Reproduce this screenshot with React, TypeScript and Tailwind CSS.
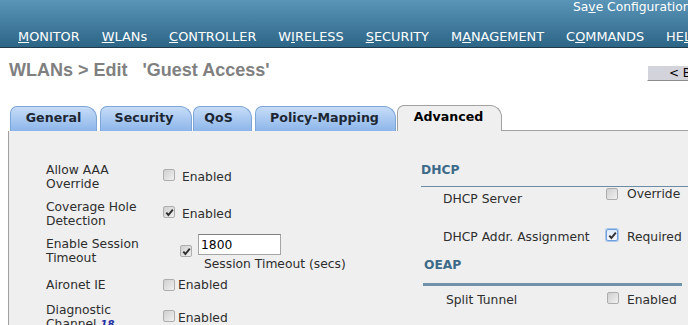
import React from 'react';

interface BoxProps {
  checked?: boolean;
  focus?: boolean;
  className?: string;
}

// small grey xp-style checkbox
function Box({ checked = false, focus = false, className = '' }: BoxProps) {
  return (
    <span
      className={`inline-flex h-[12px] w-[12px] shrink-0 items-center justify-center rounded-[2px] border ${
        focus
          ? 'border-[#6f9fdc] bg-gradient-to-b from-[#dfe9f7] to-[#f7f9fc] ring-1 ring-[#a9c6ee]'
          : 'border-[#adadad] bg-gradient-to-br from-[#cfcfcf] to-[#f1f1f1]'
      } ${className}`}
    >
      {checked && (
        <svg width="9" height="9" viewBox="0 0 9 9">
          <path d="M1.3 4.6 L3.4 7 L7.8 1.6" fill="none" stroke="#2f2f2f" strokeWidth="1.9" />
        </svg>
      )}
    </span>
  );
}

const nav = [
  ['', 'M', 'ONITOR'],
  ['', 'W', 'LANs'],
  ['', 'C', 'ONTROLLER'],
  ['W', 'I', 'RELESS'],
  ['', 'S', 'ECURITY'],
  ['M', 'A', 'NAGEMENT'],
  ['C', 'O', 'MMANDS'],
  ['HE', 'L', 'P'],
];

export default function App() {
  return (
    <div className="h-[325px] w-[688px] overflow-hidden bg-white font-['DejaVu_Sans',Verdana,sans-serif] text-[12.3px] text-[#2d2d2d]">
      {/* top bar */}
      <div className="h-[48px] border-b border-[#1e3a4b] bg-gradient-to-b from-[#5a95b8] to-[#2c6586] text-white">
        <div className="whitespace-nowrap pl-[573px] leading-[14px]">
          Sa<span className="underline">v</span>e Configuration
        </div>
        <div className="mt-[16px] flex gap-[22px] whitespace-nowrap pl-[18px] text-[12.9px] leading-[14px]">
          {nav.map(([a, u, b]) => (
            <span key={a + u + b}>
              {a}
              <span className="underline">{u}</span>
              {b}
            </span>
          ))}
        </div>
      </div>

      {/* title */}
      <div className="mt-[12px] flex">
        <div className="w-[647px] shrink-0 whitespace-pre pl-[9px] font-['Liberation_Sans',Arial,sans-serif] text-[18px] font-bold leading-[20px] text-[#808080]">
          {"WLANs > Edit   'Guest Access'"}
        </div>
        <div className="mt-[5px] h-[16px] w-[80px] shrink-0 border-t border-l border-b border-t-white border-l-white border-b-[#8c8c8c] bg-[#d3d3dc] pl-[21px] text-[12px] leading-[14px] text-black">
          &lt; Back
        </div>
      </div>

      {/* tabs */}
      <div className="mt-[24px] flex h-[26px] items-end pl-[10px] text-[12.6px] font-bold leading-[14px] text-[#1d2733]">
        <div className="flex h-[25px] w-[87px] justify-center rounded-tl-[7px] rounded-tr-[12px] border border-b-0 border-[#7da5d6] bg-gradient-to-b from-[#c6dcf7] to-[#8db6ea] pt-[4px]">
          General
        </div>
        <div className="ml-[3px] flex h-[25px] w-[92px] justify-center rounded-tl-[7px] rounded-tr-[12px] border border-b-0 border-[#7da5d6] bg-gradient-to-b from-[#c6dcf7] to-[#8db6ea] pr-[4px] pt-[4px]">
          Security
        </div>
        <div className="ml-[1px] flex h-[25px] w-[59px] justify-center rounded-tl-[7px] rounded-tr-[12px] border border-b-0 border-[#7da5d6] bg-gradient-to-b from-[#c6dcf7] to-[#8db6ea] pr-[8px] pt-[4px]">
          QoS
        </div>
        <div className="ml-[3px] flex h-[25px] w-[141px] justify-center rounded-tl-[7px] rounded-tr-[12px] border border-b-0 border-[#7da5d6] bg-gradient-to-b from-[#c6dcf7] to-[#8db6ea] pr-[2px] pt-[4px]">
          Policy-Mapping
        </div>
        <div className="ml-[1px] flex h-[26px] w-[105px] justify-center rounded-tl-[7px] rounded-tr-[12px] border border-b-0 border-[#a2a2a2] bg-[#efefef] pr-[2px] pt-[4px] text-black">
          Advanced
        </div>
        <div className="h-full flex-1 border-b border-[#a2a2a2]" />
      </div>

      {/* panel */}
      <div className="ml-[8px] flex h-[200px] border-l border-[#a0a0a0] bg-[#efefef] leading-[14px]">
        {/* left column */}
        <div className="flex w-[412px] shrink-0 flex-col pl-[37px] pt-[32px]">
          <div className="flex">
            <div className="w-[117px] shrink-0">
              Allow AAA
              <br />
              Override
            </div>
            <div className="flex items-center">
              <Box className="mb-[4px]" />
              <span className="ml-[7px]">Enabled</span>
            </div>
          </div>

          <div className="mt-[9px] flex">
            <div className="w-[117px] shrink-0">
              Coverage Hole
              <br />
              Detection
            </div>
            <div className="flex items-center">
              <Box checked className="mb-[4px]" />
              <span className="ml-[7px]">Enabled</span>
            </div>
          </div>

          <div className="mt-[6px] flex">
            <div className="mt-[3px] w-[117px] shrink-0">
              Enable Session
              <br />
              Timeout
            </div>
            <div className="flex flex-col">
              <div className="flex items-start">
                <Box checked className="ml-[17px] mt-[11px]" />
                <input
                  readOnly
                  value="1800"
                  className="ml-[6px] h-[21px] w-[83px] border border-[#a5a5a5] border-t-[#7f7f7f] bg-white pl-[2px] text-[12.3px] leading-[19px] text-black outline-none"
                />
              </div>
              <div className="ml-[41px] whitespace-nowrap">Session Timeout (secs)</div>
            </div>
          </div>

          <div className="mt-[7px] flex">
            <div className="w-[117px] shrink-0">Aironet IE</div>
            <div className="flex items-center">
              <Box />
              <span className="ml-[3px]">Enabled</span>
            </div>
          </div>

          <div className="mt-[11px] flex">
            <div className="w-[117px] shrink-0">
              Diagnostic
              <br />
              Channel{' '}
              <a className="text-[10px] font-bold italic text-[#1f2ea6] underline">18</a>
            </div>
            <div className="flex items-center">
              <Box className="mb-[4px]" />
              <span className="ml-[3px]">Enabled</span>
            </div>
          </div>
        </div>

        {/* right column */}
        <div className="flex-1 pt-[32px]">
          <div className="border-b border-[#6b8ca4] pb-[9px] font-bold text-[#3d6a89]">DHCP</div>
          <div className="flex h-[43px]">
            <div className="w-[185px] shrink-0 pl-[22px] pt-[5px]">DHCP Server</div>
            <div className="flex h-[14px] items-center whitespace-nowrap">
              <Box />
              <span className="ml-[9px]">Override</span>
            </div>
          </div>
          <div className="flex h-[28px]">
            <div className="w-[185px] shrink-0 pl-[22px]">DHCP Addr. Assignment</div>
            <div className="flex h-[14px] items-center whitespace-nowrap">
              <Box checked focus className="mb-[4px]" />
              <span className="ml-[9px]">Required</span>
            </div>
          </div>
          <div className="ml-[2px] w-[259px] border-b-[3px] border-[#6f91aa] pb-[11px] pl-[1px] font-bold text-[#3d6a89]">
            OEAP
          </div>
          <div className="mt-[7px] flex">
            <div className="w-[186px] shrink-0 pl-[25px]">Split Tunnel</div>
            <div className="flex h-[14px] items-center whitespace-nowrap">
              <Box className="mb-[4px]" />
              <span className="ml-[8px]">Enabled</span>
            </div>
          </div>
        </div>
      </div>
    </div>
  );
}
